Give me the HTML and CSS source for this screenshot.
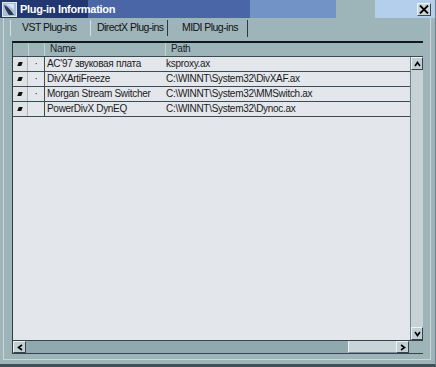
FILE: index.html
```html
<!DOCTYPE html>
<html>
<head>
<meta charset="utf-8">
<link rel="stylesheet" href="styles.css">
</head>
<body>
<div class="window">
  <div class="titlebar">
    <svg class="app-icon" width="15" height="15" viewBox="0 0 15 15">
      <rect x="0.5" y="0.5" width="14" height="14" fill="#a9bfd6" stroke="#dfe8f0"/>
      <path d="M2 3 C5 4 8 7 12 13 L7 13 C5 10 3 7 2 3 Z" fill="#2a3550"/>
      <path d="M3 2 L12 2 L12 8 C9 5 6 3 3 2 Z" fill="#d6e2ee"/>
    </svg>
    <span class="title">Plug-in Information</span>
    <span class="close">
      <svg width="10" height="9" viewBox="0 0 10 9"><path d="M1 0.5 L9 8.5 M9 0.5 L1 8.5" stroke="#000" stroke-width="1.8"/></svg>
    </span>
  </div>
  <div class="panel">
    <div class="tabs">
      <div class="tab t1">VST Plug-ins</div>
      <div class="tab t2">DirectX Plug-ins</div>
      <div class="tab t3">MIDI Plug-ins</div>
    </div>
    <div class="list">
      <div class="header">
        <div class="hc c-chk"></div>
        <div class="hc c-dot"></div>
        <div class="hc c-name">Name</div>
        <div class="hc c-path">Path</div>
        <div class="hc c-sb"></div>
      </div>
      <div class="content">
        <div class="rows-area">
          <div class="rows">
            <div class="row"><div class="c-chk chk"><span class="mark"></span></div><div class="c-dot">·</div><div class="c-name">AC'97 звуковая плата</div><div class="c-path">ksproxy.ax</div></div>
            <div class="row"><div class="c-chk chk"><span class="mark"></span></div><div class="c-dot">·</div><div class="c-name">DivXArtiFreeze</div><div class="c-path">C:\WINNT\System32\DivXAF.ax</div></div>
            <div class="row"><div class="c-chk chk"><span class="mark"></span></div><div class="c-dot">·</div><div class="c-name">Morgan Stream Switcher</div><div class="c-path">C:\WINNT\System32\MMSwitch.ax</div></div>
            <div class="row"><div class="c-chk chk"><span class="mark"></span></div><div class="c-dot"></div><div class="c-name">PowerDivX DynEQ</div><div class="c-path">C:\WINNT\System32\Dynoc.ax</div></div>
          </div>
          <div class="vscroll">
            <div class="sbtn"><svg width="7" height="6" viewBox="0 0 7 6"><path d="M1 5 L3.5 1.5 L6 5" fill="none" stroke="#000" stroke-width="1.6"/></svg></div>
            <div class="vtrack"></div>
            <div class="sbtn"><svg width="7" height="6" viewBox="0 0 7 6"><path d="M1 1 L3.5 4.5 L6 1" fill="none" stroke="#000" stroke-width="1.6"/></svg></div>
          </div>
        </div>
        <div class="hscroll">
          <div class="sbtn"><svg width="6" height="7" viewBox="0 0 6 7"><path d="M5 1 L1.5 3.5 L5 6" fill="none" stroke="#000" stroke-width="1.6"/></svg></div>
          <div class="htrack"><div class="hthumb"></div></div>
          <div class="sbtn"><svg width="6" height="7" viewBox="0 0 6 7"><path d="M1 1 L4.5 3.5 L1 6" fill="none" stroke="#000" stroke-width="1.6"/></svg></div>
          <div class="corner"></div>
        </div>
      </div>
    </div>
  </div>
</div>
</body>
</html>
```
FILE: styles.css
```css
* { box-sizing: border-box; }
html, body { margin: 0; padding: 0; }
body {
  background: #9db5b9;
  font-family: "Liberation Sans", Arial, sans-serif;
  font-size: 10px;
  letter-spacing: -0.3px;
  color: #000;
}
.window {
  width: 436px;
  height: 367px;
  background: #9db5b9;
  border-bottom: 3px solid #3f5056;
  border-right: 1px solid #6d8288;
  display: flex;
  flex-direction: column;
}
.titlebar {
  height: 18px;
  flex: none;
  display: flex;
  align-items: center;
  padding-left: 2px;
  background: linear-gradient(to right,
    #22366f 0, #22366f 88px,
    #4b66a6 88px, #4b66a6 250px,
    #7293c6 250px, #7293c6 336px,
    #9db5b9 336px, #9db5b9 375px,
    #b3cfec 375px, #b3cfec 100%);
}
.app-icon { flex: none; }
.title {
  color: #fff;
  font-weight: bold;
  font-size: 11px;
  margin-left: 3px;
  letter-spacing: -0.3px;
}
.close {
  margin-left: auto;
  margin-right: 4px;
  width: 14px;
  height: 13px;
  background: #c9d5d8;
  border: 1px solid;
  border-color: #f0f4f4 #3b4a50 #3b4a50 #f0f4f4;
  display: flex;
  align-items: center;
  justify-content: center;
}
.panel {
  flex: 1;
  margin: 0 4px 4px 3px;
  border-left: 1px solid #c9d7d8;
  border-right: 1px solid #c9d7d8;
  border-bottom: 1px solid #c9d7d8;
  display: flex;
  flex-direction: column;
  padding: 0 7px 5px 8px;
}
.tabs {
  height: 20px;
  flex: none;
  display: flex;
  padding-top: 2px;
  margin-left: -2px;
}
.tab {
  height: 16px;
  line-height: 15px;
  font-size: 10.5px;
  letter-spacing: -0.55px;
  color: #111;
  border-left: 1px solid #d4e0e0;
  border-right: 1px solid transparent;
  white-space: nowrap;
}
.t1 { width: 80px; padding-left: 11px; }
.t2 { width: 78px; padding-left: 6px; border-right-color: #2b3a40; }
.t3 { width: 80px; padding-left: 13px; border-left-color: transparent; border-right-color: #2b3a40; height: 17px; }
.list {
  flex: 1;
  margin-top: 3px;
  display: flex;
  flex-direction: column;
  border-top: 2px solid #101820;
  border-left: 1px solid #2f3e44;
}
.header {
  height: 14px;
  flex: none;
  display: flex;
  background: #9db5b9;
  border-bottom: 1px solid #3a4a50;
}
.hc {
  height: 13px;
  line-height: 12px;
  color: #1a2226;
  border-left: 1px solid #c4d2d4;
}
.hc.c-chk { border-left: none; }
.hc.c-sb { flex: none; width: 13px; border-left: none; }
.c-chk { width: 15px; flex: none; }
.c-dot { width: 16px; flex: none; text-align: center; }
.c-name { width: 121px; flex: none; padding-left: 5px; white-space: nowrap; overflow: hidden; }
.c-path { flex: 1; padding-left: 5px; white-space: nowrap; overflow: hidden; }
.content {
  flex: 1;
  display: flex;
  flex-direction: column;
  background: #e3e6ea;
}
.rows-area {
  flex: 1;
  display: flex;
}
.rows { flex: 1; }
.row {
  height: 15px;
  display: flex;
  border-bottom: 1px solid #3c4c54;
  line-height: 14px;
  color: #1a1a1a;
}
.row .c-name { border-left: 1px solid #3c4c54; padding-left: 2px; }
.row .c-path { padding-left: 1px; }
.chk {
  border-right: 1px solid #aab8bc;
  background: #dfe3e6;
  display: flex;
  align-items: center;
  justify-content: center;
}
.mark {
  width: 4px;
  height: 4px;
  background: #111;
  transform: skewX(-20deg);
}
.row .c-dot { line-height: 13px; }
.vscroll {
  width: 13px;
  flex: none;
  display: flex;
  flex-direction: column;
  border-left: 1px solid #6f858b;
  background: #c7d2d5;
}
.vtrack { flex: 1; }
.sbtn {
  width: 13px;
  height: 13px;
  flex: none;
  background: #c3d0d3;
  border: 1px solid;
  border-color: #eef3f3 #34444a #34444a #eef3f3;
  display: flex;
  align-items: center;
  justify-content: center;
}
.vscroll .sbtn { width: 12px; }
.hscroll {
  height: 14px;
  flex: none;
  display: flex;
  background: #8fa9ae;
  border-top: 1px solid #34444a;
  border-bottom: 1px solid #34444a;
}
.hscroll .sbtn { height: 12px; }
.htrack { flex: 1; display: flex; justify-content: flex-end; }
.hthumb {
  width: 48px;
  background: #c8d4d7;
  border-left: 1px solid #eef3f3;
  border-bottom: 1px solid #7a9096;
}
.corner { width: 14px; flex: none; background: #9db5b9; }
```
